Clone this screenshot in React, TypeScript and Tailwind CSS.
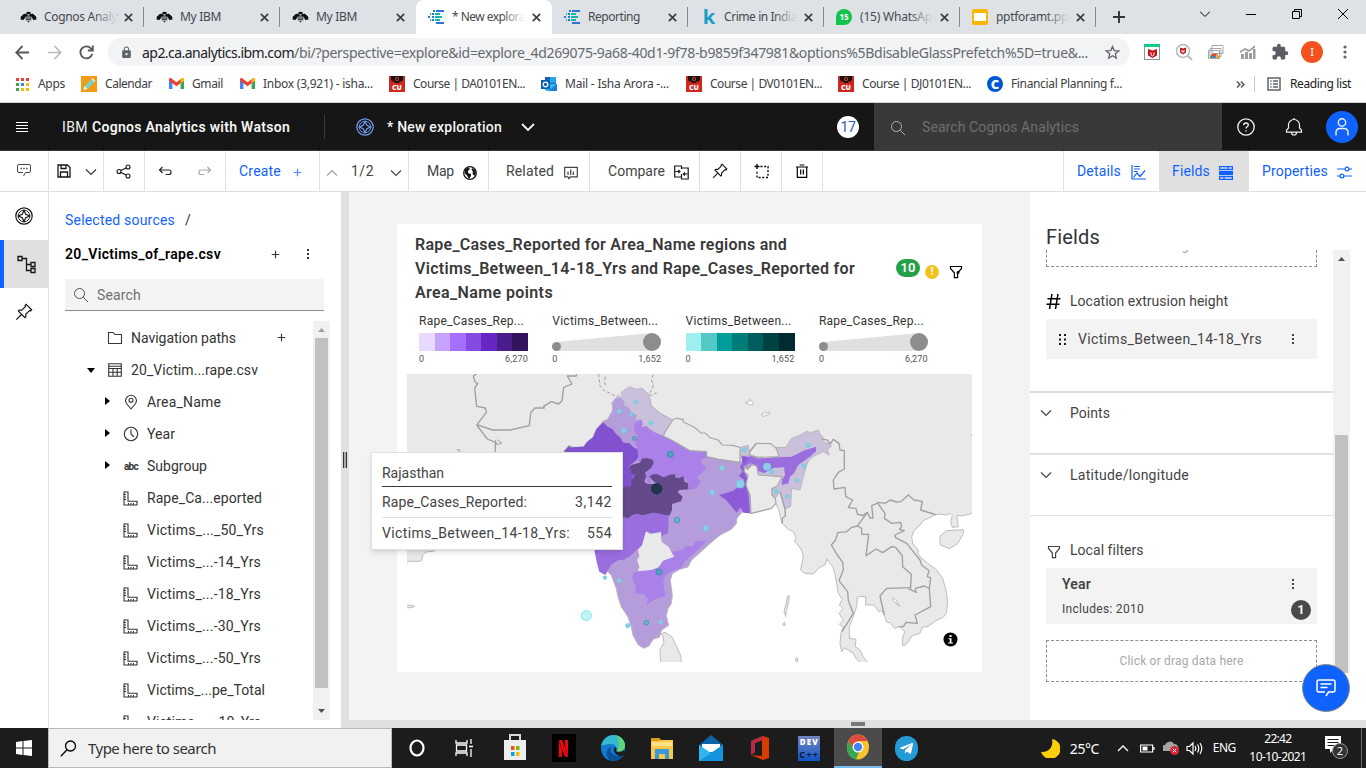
import React, { useLayoutEffect, useRef, type ReactNode } from "react";
import { SiNetflix } from "react-icons/si";
import { FaTelegramPlane } from "react-icons/fa";
import { MdExtension, MdLock } from "react-icons/md";

/* Single line of text tracked out or in so that it fills the given width. */
function T({ w, c = "", children }: { w: number; c?: string; children: string }) {
  const ref = useRef<HTMLSpanElement>(null);
  useLayoutEffect(() => {
    const el = ref.current;
    if (!el) return;
    el.style.letterSpacing = "0px";
    const natural = el.getBoundingClientRect().width;
    el.style.letterSpacing = `${(w - natural) / children.length}px`;
  }, [w, children]);
  return (
    <span ref={ref} className={`inline-block shrink-0 whitespace-pre ${c}`}>
      {children}
    </span>
  );
}

function Icon({ s = 16, v = 16, c = "", w = 1, children }: { s?: number; v?: number; c?: string; w?: number; children: ReactNode }) {
  return (
    <svg width={s} height={s} viewBox={`0 0 ${v} ${v}`} className={`block shrink-0 ${c}`} fill="none" stroke="currentColor" strokeWidth={w}>
      {children}
    </svg>
  );
}

const Chevron = ({ c = "", s = 12, up = false }: { c?: string; s?: number; up?: boolean }) => (
  <Icon s={s} v={12} c={c} w={1.2}>
    <path d={up ? "M1 8.5 6 3.5 11 8.5" : "M1 3.5 6 8.5 11 3.5"} />
  </Icon>
);
const Plus = ({ c = "", s = 10 }: { c?: string; s?: number }) => (
  <Icon s={s} v={10} c={c} w={1.3}><path d="M5 .8v8.4M.8 5h8.4" /></Icon>
);
const Dots = ({ c = "" }: { c?: string }) => (
  <svg width="4" height="14" viewBox="0 0 4 14" className={`shrink-0 ${c}`} fill="currentColor">
    <rect x="1" y="2" width="2" height="2" /><rect x="1" y="6" width="2" height="2" /><rect x="1" y="10" width="2" height="2" />
  </svg>
);
const Magnifier = ({ c = "", s = 16 }: { c?: string; s?: number }) => (
  <Icon s={s} c={c}><circle cx="6.5" cy="6.5" r="5" /><path d="M10.3 10.3 15 15" /></Icon>
);
const Compass = ({ c = "", s = 18 }: { c?: string; s?: number }) => (
  <Icon s={s} v={18} c={c} w={1.2}>
    <circle cx="9" cy="9" r="8.2" /><circle cx="9" cy="9" r="5.8" strokeWidth=".9" />
    <path d="M9 3.400 10.800 7.200 14.600 9 10.800 10.800 9 14.600 7.200 10.800 3.400 9 7.200 7.200Z" />
  </Icon>
);
const Pin = ({ s = 16 }: { s?: number }) => (
  <Icon s={s} w={1.1}><path d="M10 1.2 14.8 6 13.8 7 13 6.6 9.6 10 9.6 12.2 8.8 13 3 7.2 3.8 6.4H6L9.4 3 9 2.2ZM5.8 10.2 1.2 14.8" /></Icon>
);
const Funnel = ({ s = 14, dot = false }: { s?: number; dot?: boolean }) => (
  <Icon s={s} v={14} w={1.2}>
    <path d="M1.5 1.5h11v2L8.6 8v4.7H5.4V8L1.5 3.5Z" />{dot && <circle cx="9" cy="7.5" r="1.5" fill="currentColor" stroke="none" />}
  </Icon>
);

/* ---------- favicons ---------- */
const Bee = () => (
  <svg width="17" height="12" viewBox="0 0 17 12" fill="#111" className="shrink-0">
    <path d="M7.500 3 4 2.800.8 5.800l-.3 2.700 3.200.6 1.800-3.300 2-.6ZM9.500 3l3.500-.2 3.200 3 .3 2.700-3.200.6-1.800-3.300-2-.6Z" />
    <ellipse cx="8.500" cy="2" rx="2.300" ry="1.300" />
    <path d="M5.800 4.500h5.400v1H5.800ZM5.300 6.400h6.400v1H5.300ZM5.800 8.300h5.400v1H5.800ZM7 10.200h3l-1.500 1.300Z" />
  </svg>
);
const Dashes = () => (
  <svg width="17" height="16" viewBox="0 0 17 16" className="shrink-0">
    <g fill="#2f74d8"><path d="M8 1h8v2H8ZM4 4h2v2H4ZM0 7h2v2H0ZM4 10h2v2H4ZM8 13h8v2H8ZM4 7h2v2H4ZM5 1h2v2H5Z" /></g>
    <g fill="#14b8a6"><path d="M7 4h5v2H7ZM7 7h7v2H7ZM7 10h5v2H7ZM2 10h1v2H2ZM2 4h1v2H2Z" /></g>
  </svg>
);
const CU = () => (
  <div className="flex h-4 w-4 shrink-0 flex-col items-center bg-[#d0281f]">
    <svg width="16" height="8" viewBox="0 0 16 8"><path d="M2 0h12v4l-2 2-1-1-1 2H6L5 5 4 6 2 4Z" fill="#1b1110" /><circle cx="8" cy="3" r="2" fill="#c2493e" /><circle cx="8" cy="3" r="1" fill="#1b1110" /></svg>
    <span className="text-[7px] leading-[7px] font-black text-white">CU</span>
  </div>
);
const GmailM = () => (
  <svg width="15" height="12" viewBox="0 0 15 12" className="shrink-0">
    <path d="M0 1.500V11h3.400V4.500Z" fill="#4285f4" /><path d="M15 1.500V11h-3.400V4.500Z" fill="#34a853" />
    <path d="M0 1.500C0 .2 1.500-.3 2.500.5l5 3.800 5-3.800C13.500-.3 15 .2 15 1.500v1.200L7.500 8.300 0 2.700Z" fill="#ea4335" />
    <path d="M11.600 1.200 12.500.5c1-.8 2.500-.3 2.500 1v1.200l-3.400 2.500Z" fill="#fbbc04" />
  </svg>
);
const kLogo = <span className="w-4 pl-0.5 text-center text-[20px] leading-4 font-bold text-[#1a9cc9]">k</span>;
const WhatsApp = () => (
  <div className="flex h-4 w-4 shrink-0 items-center justify-center rounded-full rounded-bl-xs bg-[#12c34d] text-[8px] font-bold text-white">15</div>
);
const Slides = () => <div className="h-4 w-4 shrink-0 rounded-xs bg-[#fbb605] px-0.5 py-1"><div className="h-2 bg-white" /></div>;

const tabs: { icon: ReactNode; label: string; w: number; active?: boolean; sep?: boolean; fade?: boolean }[] = [
  { icon: <Bee />, label: "Cognos Analy", w: 73, sep: true, fade: true },
  { icon: <Bee />, label: "My IBM", w: 41, sep: true },
  { icon: <Bee />, label: "My IBM", w: 41 },
  { icon: <Dashes />, label: "* New explora", w: 73, active: true, fade: true },
  { icon: <Dashes />, label: "Reporting", w: 52, sep: true },
  { icon: kLogo, label: "Crime in India", w: 73, sep: true, fade: true },
  { icon: <WhatsApp />, label: "(15) WhatsAp", w: 72, sep: true, fade: true },
  { icon: <Slides />, label: "pptforamt.pp", w: 72, sep: true, fade: true },
];

function BrowserTabs() {
  return (
    <div className="flex h-[34px] bg-[#dee1e6] pl-2 text-[12px] text-[#45494d]">
      {tabs.map((t, i) => (
        <div key={i} className={`flex w-[136px] items-center ${t.active ? "rounded-t-lg bg-white" : ""}`}>
          <div className="flex w-full items-center pl-3">
            <div className="flex w-4 justify-center">{t.icon}</div>
            <div className="relative ml-2 w-[73px]">
              <T w={t.w}>{t.label}</T>
              {t.fade && <div className={`absolute top-0 right-0 h-full w-6 bg-gradient-to-r from-transparent ${t.active ? "to-white" : "to-[#dee1e6]"}`} />}
            </div>
            <Icon s={9} v={9} c="ml-[7px] text-[#3c4043]" w={1.7}><path d="m.8.8 7.400 7.400M8.200.8.8 8.200" /></Icon>
            <div className={`ml-auto h-5 w-px ${t.sep ? "bg-[#85888c]" : ""}`} />
          </div>
        </div>
      ))}
      <div className="ml-[17px] flex items-center"><Icon s={12} v={12} c="text-[#333]" w={1.900}><path d="M6 0v12M0 6h12" /></Icon></div>
      <div className="ml-auto flex h-7 items-center text-black">
        <Icon s={10} v={10} c="mr-[36px]"><path d="m0 2.500 5 5 5-5" /></Icon>
        <div className="mr-[36px] h-px w-2.5 bg-black" />
        <Icon s={10} v={10} c="mr-[36px]"><path d="M.5 2.500h7v7h-7ZM2.500 2.500v-2h7v7h-2" /></Icon>
        <Icon s={10} v={10} c="mr-[18px]"><path d="m0 0 10 10M10 0 0 10" /></Icon>
      </div>
    </div>
  );
}

const Shield = () => <svg width="9" height="9" viewBox="0 0 9 9"><path d="m0 0 4.500 1.500L9 0v6.500L4.500 9 0 6.500Z" fill="#c01818" /><path d="M3 3.500v2.300L4.500 7 6 5.800V3.500" stroke="#fff" fill="none" /></svg>;

function AddressBar() {
  return (
    <div className="flex h-9 items-center bg-white text-[14px]">
      <Icon s={15} v={15} c="ml-[15px] text-[#55585c]" w={1.800}><path d="M14 7.500H1.500M7.500 1 1.200 7.500l6.300 6.500" /></Icon>
      <Icon s={15} v={15} c="ml-[17px] text-[#b8babd]" w={1.600}><path d="M1 7.500h12.500M7.500 1l6.300 6.500-6.300 6.500" /></Icon>
      <Icon s={15} v={15} c="ml-[17px] text-[#55585c]" w={1.900}><path d="M13.200 9A6 6 0 1 1 12 3.500L13 5M13.800.5v5H8.800" /></Icon>
      <div className="ml-[14px] flex h-7 w-[1022px] items-center rounded-full bg-[#f1f3f4] pl-3">
        <MdLock className="text-[#5f6368]" size={13} />
        <T w={152} c="ml-[9px] text-[#202124]">ap2.ca.analytics.ibm.com</T>
        <T w={794} c="text-[#676a6e]">/bi/?perspective=explore&id=explore_4d269075-9a68-40d1-9f78-b9859f347981&options%5BdisableGlassPrefetch%5D=true&...</T>
        <Icon s={15} v={15} c="mr-[10px] ml-auto text-[#5f6368]" w={1.300}><path d="m7.500 1.500 1.700 4.100 4.500.3-3.400 2.900 1 4.400-3.800-2.400-3.800 2.400 1-4.400L1.300 5.900l4.500-.3Z" /></Icon>
      </div>
      <div className="ml-[14px] flex h-4 w-4 items-center justify-center border border-t-[3px] border-[#8d9295] border-t-[#0ccf7f]"><Shield /></div>
      <svg width="18" height="18" viewBox="0 0 18 18" className="ml-[15px]"><circle cx="8" cy="8" r="6.500" fill="none" stroke="#b3bcc3" strokeWidth="1.500" /><path d="m13 13 4 4" stroke="#b3bcc3" strokeWidth="2" /><path d="m5 4.500 3 1 3-1v5L8 11.500l-3-2Z" fill="#c01818" /><path d="M7 7v2h2V7" stroke="#fff" fill="none" /></svg>
      <svg width="16" height="16" viewBox="0 0 16 16" className="ml-[15px]" fill="#fff" stroke="#a5a8aa"><path d="M4 1.500h11v8H4ZM2 4.500h11v8H2ZM.5 6.500h11v8H.5Z" /><path d="M2 14a4.500 4.500 0 0 1 9 0Z" fill="#ea4335" stroke="none" /><path d="M8 10.200A4.500 4.500 0 0 1 11 14H8Z" fill="#fbbc04" stroke="none" /><path d="M2 14a4.500 4.500 0 0 1 2-3.600L5.500 14Z" fill="#34a853" stroke="none" /><path d="M4.500 14a2 2 0 0 1 4 0Z" fill="#4285f4" stroke="none" /></svg>
      <svg width="16" height="14" viewBox="0 0 16 14" className="ml-[16px]" fill="#9c9ea1"><path d="M1 9h3v5H1ZM5 7h3v7H5ZM9 8h3v6H9ZM13 4h2.500v10H13ZM0 6l5-3 4 2 6-5v2.500L9 7 5 5 0 8Z" /></svg>
      <MdExtension className="ml-[15px] text-[#5a5d61]" size={18} />
      <div className="ml-[12px] flex h-[22px] w-[22px] items-center justify-center rounded-full bg-[#f4511e] text-[11px] text-white">I</div>
      <svg width="4" height="14" viewBox="0 0 4 14" className="ml-[20px]" fill="#5f6368"><circle cx="2" cy="2" r="1.600" /><circle cx="2" cy="7" r="1.600" /><circle cx="2" cy="12" r="1.600" /></svg>
    </div>
  );
}

const AppsGrid = () => (
  <div className="grid grid-cols-3 gap-[2px]">
    {["bg-[#ea4335]", "bg-[#ea4335]", "bg-[#ea4335]", "bg-[#34a853]", "bg-[#4285f4]", "bg-[#fbbc04]", "bg-[#34a853]", "bg-[#fbbc04]", "bg-[#fbbc04]"].map((c, i) => <div key={i} className={`h-[3px] w-[3px] ${c}`} />)}
  </div>
);
const Pencil = () => <svg width="16" height="16" viewBox="0 0 16 16"><path d="M0 0h16v16H0Z" fill="#f39a17" /><path d="m2.500 14 1-4 7-7 3 3-7 7Z" fill="#79d2c3" /><path d="m2.500 14 1-4 3 3Z" fill="#fff0c8" /><path d="m10.500 3 1-1 3 3-1 1Z" fill="#fce3e0" /></svg>;
const Outlook = () => <svg width="16" height="16" viewBox="0 0 16 16"><path d="M4 1h11v13H4Z" fill="#1066b5" /><path d="M9 1h6v6H9Z" fill="#2ba5e6" /><path d="M4 8h12v7H5Z" fill="#36b9f1" /><path d="m16 8-9 7h8l1-1Z" fill="#1a7fd0" /><path d="M0 4h9v9H0Z" fill="#0a5fb4" /><circle cx="4.500" cy="8.500" r="2.300" fill="none" stroke="#fff" strokeWidth="1.300" /></svg>;
const Coursera = () => <div className="flex h-4 w-4 items-center justify-center rounded-full bg-[#0056d2] text-[13px] leading-4 font-black text-white">C</div>;

const bookmarks: { icon: ReactNode; label: string; w: number; cell: string }[] = [
  { icon: <AppsGrid />, label: "Apps", w: 27, cell: "w-[67px]" },
  { icon: <Pencil />, label: "Calendar", w: 47, cell: "w-[87px]" },
  { icon: <GmailM />, label: "Gmail", w: 31, cell: "w-[71px]" },
  { icon: <GmailM />, label: "Inbox (3,921) - isha...", w: 110, cell: "w-[150px]" },
  { icon: <CU />, label: "Course | DA0101EN...", w: 112, cell: "w-[152px]" },
  { icon: <Outlook />, label: "Mail - Isha Arora -...", w: 104, cell: "w-[145px]" },
  { icon: <CU />, label: "Course | DV0101EN...", w: 112, cell: "w-[152px]" },
  { icon: <CU />, label: "Course | DJ0101EN...", w: 109, cell: "w-[149px]" },
  { icon: <Coursera />, label: "Financial Planning f...", w: 111, cell: "w-[140px]" },
];

function Bookmarks() {
  return (
    <div className="flex h-[33px] items-center border-b border-[#d5d5d5] bg-white pb-1 pl-[14px] text-[12px] text-[#3c4043]">
      {bookmarks.map((b, i) => (
        <div key={i} className={`flex shrink-0 items-center gap-2 ${b.cell}`}>
          <div className="flex w-4 justify-center">{b.icon}</div>
          <T w={b.w}>{b.label}</T>
        </div>
      ))}
      <Icon s={9} v={9} c="ml-auto text-[#555]" w={1.500}><path d="m1 1.500 3 3-3 3M5 1.500l3 3-3 3" /></Icon>
      <div className="ml-[9px] h-4 w-px bg-[#c8cacc]" />
      <Icon s={14} v={14} c="ml-[12px] text-[#5f6368]" w={1.500}><path d="M1 1h12v12H1ZM3.300 4h1.300M6 4h5M3.300 7h1.300M6 7h5M3.300 10h1.300M6 10h5" /></Icon>
      <T w={61} c="mr-[15px] ml-[9px] text-[#202124]">Reading list</T>
    </div>
  );
}

function AppHeader() {
  return (
    <div className="flex h-12 items-center border-b border-[#393939] bg-[#161616] pt-px text-[14px] text-[#f4f4f4]">
      <Icon s={12} v={12} c="ml-4 text-white"><path d="M0 1.500h12M0 4.500h12M0 7.500h12M0 10.500h12" /></Icon>
      <T w={26} c="ml-[34px]">IBM</T>
      <T w={198} c="ml-1 font-semibold">Cognos Analytics with Watson</T>
      <div className="ml-[34px] h-6 w-px bg-[#393939]" />
      <Compass c="ml-[31px] text-[#6f9bf0]" />
      <T w={115} c="ml-[13px] font-medium">* New exploration</T>
      <Icon s={14} v={14} c="ml-[19px]" w={1.800}><path d="m1 4 6 6 6-6" /></Icon>
      <div className="ml-[302px] flex h-[22px] w-[22px] items-center justify-center rounded-full bg-white text-[#2a5db0]"><T w={15}>17</T></div>
      <div className="-mt-px ml-[15px] flex h-[47px] w-[348px] items-center bg-[#393939] pt-0.5 pl-4 text-[#6f6f6f]">
        <Magnifier c="text-[#b0b0b0]" />
        <T w={157} c="ml-4">Search Cognos Analytics</T>
      </div>
      <Icon s={18} v={18} c="ml-[15px]" w={1.300}><circle cx="9" cy="9" r="8.200" /><path d="M6.700 7.200C6.700 5.800 7.600 5 9 5s2.300.8 2.300 2-.7 1.500-1.500 2c-.7.4-.8.800-.8 1.600M9 12.200v1.400" /></Icon>
      <Icon s={18} v={18} c="ml-[30px]" w={1.200}><path d="M1.500 14.200v-2L3.500 10V7a5.500 5.500 0 0 1 11 0v3l2 2.200v2ZM6.500 14.500a2.500 2.500 0 0 0 5 0M9 0v1.500" /></Icon>
      <div className="ml-[23px] flex h-8 w-8 items-center justify-center rounded-full bg-[#0f62fe]"><Icon s={20} v={20} w={1.400}><circle cx="10" cy="5.500" r="3.700" /><path d="M4 18.500v-3c0-2.500 1.500-4 4-4h4c2.500 0 4 1.500 4 4v3" /></Icon></div>
    </div>
  );
}

function Toolbar() {
  const cell = "flex h-full shrink-0 items-center border-r border-[#e0e0e0]";
  return (
    <div className="flex h-[41px] items-center border-b border-[#e0e0e0] bg-white text-[14px] text-[#444]">
      <div className={`${cell} w-[49px] pl-4`}><Icon><path d="M3 1.500h10A1.500 1.500 0 0 1 14.500 3v5A1.500 1.500 0 0 1 13 9.500h-3.500L7.500 13M7 9.500H3A1.500 1.500 0 0 1 1.500 8V3A1.500 1.500 0 0 1 3 1.500" /><path d="M4.500 5.500h1.300M7.300 5.500h1.300M10.200 5.500h1.300" strokeWidth="1.500" /></Icon></div>
      <div className={`${cell} w-[55px] pl-2 text-[#161616]`}>
        <Icon s={14} v={14} w={1.300}><path d="M1 1h9.500L13 3.500V13H1ZM4 1v3.500h5V1M3.500 13V8h7v5" /></Icon>
        <Chevron c="ml-[14px] mt-px text-[#393939]" />
      </div>
      <div className={`${cell} w-[41px] pl-3 text-[#161616]`}><Icon s={15} v={15} w={1.100}><circle cx="3" cy="7.500" r="2" /><circle cx="12" cy="3" r="2" /><circle cx="12" cy="12" r="2" /><path d="m4.800 6.600 5.400-2.700M4.800 8.400l5.400 2.700" /></Icon></div>
      <div className={`${cell} w-[81px] gap-[26px] pl-[13px] text-[#262626]`}>
        <Icon s={14} v={14} w={1.200}><path d="M4.500 3 1.500 6l3 3M1.500 6H11a2 2 0 0 1 2 2v.5a2 2 0 0 1-2 2H7.500" /></Icon>
        <Icon s={14} v={14} c="text-[#a8a8a8]" w={1.200}><path d="m9.500 3 3 3-3 3M12.500 6H3a2 2 0 0 0-2 2v.5a2 2 0 0 0 2 2h3.500" /></Icon>
      </div>
      <div className={`${cell} w-[94px] pl-[13px] text-[#0f62fe]`}><T w={42}>Create</T><Plus s={9} c="mt-[3px] ml-[12px] text-[#4589ff]" /></div>
      <div className={`${cell} w-[89px] pl-[6px]`}><Chevron up c="mt-1 text-[#a0a0a0]" /><T w={23} c="ml-[13px]">1/2</T><Chevron c="mt-1 ml-[16px]" /></div>
      <div className={`${cell} w-[80px] pl-[18px]`}><T w={27}>Map</T>
        <svg width="14" height="14" viewBox="0 0 14 14" className="mt-[3px] ml-[9px]"><circle cx="7" cy="7" r="6.300" fill="#fff" stroke="#161616" strokeWidth="1.300" /><path d="M2 3 5.500 1.500 7 3 5 5v2l3 1v2l-2 3L4 9.500 1.500 7ZM9 2l3 2 1 3-1.500 3L9.500 8 10 5.500 8.500 4Z" fill="#161616" /></svg>
      </div>
      <div className={`${cell} w-[101px] pl-[17px]`}><T w={48}>Related</T><Icon s={14} v={14} c="mt-[3px] ml-[10px]" w={1.200}><path d="M.7 1.300h12.600v9.500H6.500L5 12.700 4 10.800H.7ZM4 5.500V9M6.700 3.500V9M9.300 5.500V9" /></Icon></div>
      <div className={`${cell} w-[110px] pl-[18px]`}><T w={57}>Compare</T><Icon s={15} v={15} c="mt-[3px] ml-[9px] text-[#161616]" w={1.200}><path d="M7.500 12H.7V1h6.800v3M7.500 9v5h6.700V3H7.500M1.500 6.500H6M4.300 4.800 6 6.500 4.300 8.200M13.500 9H9.300M11 7.300 9.300 9 11 10.700" /></Icon></div>
      <div className={`${cell} w-[41px] justify-center text-[#161616]`}><Pin /></div>
      <div className={`${cell} w-[41px] justify-center`}><Icon s={15} v={15} c="text-black" w={1.300}><path d="M3 0v5M.5 2.500h5" /><path d="M6.500 2.500H14v11H3V6" strokeDasharray="2 1.700" /></Icon></div>
      <div className={`${cell} w-[41px] justify-center`}><Icon s={14} v={14} c="text-black" w={1.200}><path d="M1 3h12M4.700 1h4.600M2.300 3v10.300h9.400V3M5.700 5.500v5M8.300 5.500v5" /></Icon></div>
      <div className="ml-auto flex h-full w-[96px] items-center border-l border-[#e0e0e0] pl-[13px] text-[#0f62fe]"><T w={44}>Details</T><Icon s={15} v={15} c="mt-[3px] ml-[10px]" w={1.200}><path d="M1 0v14h14M3 1.500h6M3 4h6M3 6.500h3.500M2.500 12.500l3.500-4.500 3 3.500 5-6" /></Icon></div>
      <div className="flex h-full w-[90px] items-center bg-[#e0e0e0] pl-[13px] text-[#0f62fe]"><T w={38}>Fields</T><Icon s={14} v={14} c="mt-[3px] ml-[9px]" w={1.200}><path d="M.6.6h12.800v2.800H.6ZM.6 10.600h12.800v2.800H.6ZM9 .6v2.800M5 10.600v2.800" /><path d="M0 4.800h14v4.400H0Z" fill="currentColor" stroke="none" /></Icon></div>
      <div className="flex h-full w-[117px] items-center pl-[13px] text-[#0f62fe]"><T w={66}>Properties</T><Icon s={15} v={15} c="mt-[3px] ml-[9px]" w={1.200}><path d="M0 4h8M12 4h3M0 11h3M7 11h8" /><circle cx="10" cy="4" r="1.900" /><circle cx="5" cy="11" r="1.900" /></Icon></div>
    </div>
  );
}

const Ruler = () => <Icon s={15} v={15} w={1.100}><path d="M1 1h4v9.300h9V14H1ZM1 3.500h2M1 6h2M1 8.500h2M5.500 14v-2M8 14v-2M10.500 14v-2" /></Icon>;
const measures: [string, number][] = [["Rape_Ca...eported", 115], ["Victims_..._50_Yrs", 117], ["Victims_...-14_Yrs", 114], ["Victims_...-18_Yrs", 114], ["Victims_...-30_Yrs", 114], ["Victims_...-50_Yrs", 114], ["Victims_...pe_Total", 118], ["Victims_..._10_Yrs", 114]];

function Sources() {
  return (
    <div className="flex h-[536px] shrink-0">
      <div className="flex w-[49px] flex-col border-r border-[#e0e0e0] bg-white text-[#161616]">
        <div className="flex h-12 items-center justify-center"><Compass /></div>
        <div className="flex h-12 items-center border-l-4 border-[#0f62fe] bg-[#e0e0e0] pl-[13px]"><Icon s={19} v={19} w={1.300}><path d="M1 1.500h4v4H1ZM5 3.500h4.500v12H14M9.500 9.500H14M14 7.500h4v4h-4ZM14 13.500h4v4h-4Z" /></Icon></div>
        <div className="flex h-12 items-center justify-center"><Pin s={18} /></div>
      </div>
      <div className="flex w-[292px] flex-col bg-white pl-4 text-[14px] text-[#333]">
        <div className="mt-[18px] flex h-5 items-center"><T w={110} c="text-[#0f62fe]">Selected sources</T><T w={5} c="ml-[10px]">/</T></div>
        <div className="mt-[14px] flex h-5 items-center"><T w={156} c="font-semibold text-black">20_Victims_of_rape.csv</T><Plus s={9} c="ml-[50px]" /><Dots c="ml-[26px]" /></div>
        <div className="mt-[15px] flex h-8 w-[259px] items-center border-b border-[#8d8d8d] bg-[#f3f3f3] pt-px pl-[8px] text-[#6f6f6f]"><Magnifier c="text-[#525252]" /><T w={44} c="ml-2">Search</T></div>
        <div className="mt-[10px] flex h-[399px] overflow-hidden">
          <div className="w-[248px] pt-px">
            <div className="flex h-8 items-center pl-[42px]">
              <Icon s={16} c="text-[#393939]" w={1.100}><path d="M1.500 2.500h4.700l1.800 2h6.500v9h-13Z" /></Icon><T w={105} c="ml-2">Navigation paths</T><Plus s={9} c="mb-0.5 ml-[41px]" />
            </div>
            <div className="flex h-8 items-center pl-[22px]">
              <svg width="8" height="5" viewBox="0 0 8 5"><path d="M0 0h8L4 5Z" fill="#000" /></svg>
              <Icon s={14} v={14} c="ml-[13px]" w={1.100}><path d="M.7.7h12.600v12.600H.7ZM.7 3.300h12.600M.7 5.500h12.600M.7 9.300h12.600M5 5.500v7.800M9.200 5.500v7.800" /></Icon><T w={127} c="ml-[9px]">20_Victim...rape.csv</T>
            </div>
            {[
              { n: "Area_Name", w: 74, i: <Icon s={16} w={1.100}><path d="M8 15 3.500 9.500a5.300 5.300 0 1 1 9 0Z" /><circle cx="8" cy="6.300" r="2" /></Icon> },
              { n: "Year", w: 28, i: <Icon s={16} w={1.100}><circle cx="8" cy="8" r="6.700" /><path d="M8 3.500V8l2.800 3" /></Icon> },
              { n: "Subgroup", w: 60, i: <T w={14} c="text-[10px] font-bold">abc</T> },
            ].map((r) => (
              <div key={r.n} className="flex h-8 items-center pl-[40px]">
                <svg width="5" height="8" viewBox="0 0 5 8" className="mb-[3px]"><path d="M0 0v8l5-4Z" fill="#000" /></svg>
                <div className="ml-[13px] flex w-4 justify-center">{r.i}</div><T w={r.w} c="ml-[8px]">{r.n}</T>
              </div>
            ))}
            {measures.map(([m, w], i) => (
              <div key={i} className="flex h-8 items-center pl-[58px]"><Ruler /><T w={w} c="ml-[9px]">{m}</T></div>
            ))}
          </div>
          <div className="flex w-[17px] flex-col items-center bg-[#f1f1f1]">
            <svg width="7" height="17" viewBox="0 0 7 17"><path d="M0 11h7L3.500 7Z" fill="#a3a3a3" /></svg>
            <div className="h-[350px] w-[13px] bg-[#c1c1c1]" />
            <svg width="7" height="17" viewBox="0 0 7 17" className="mt-auto"><path d="M0 6h7l-3.500 4Z" fill="#505050" /></svg>
          </div>
        </div>
      </div>
      <div className="flex w-2 flex-col bg-[#e0e0e0] pt-[260px]"><div className="ml-0.5 h-4 w-1 border-x border-[#333] bg-[#aaa]" /></div>
    </div>
  );
}

/* ---------- map ---------- */
const shape = { stroke: "none" } as const;
function WorldMap() {
  return (
    <svg width="565" height="288" viewBox="33 42 1695 864" className="block" fill="none" strokeLinejoin="round">
      <rect x="33" y="42" width="1695" height="864" fill="#fff" />
      <g fill="#e9e9e9" stroke="#bdbdbd" strokeWidth="3">
        <path d="M20 565H115V573L90 576 80 585 77 602 70 604 40 604 20 612ZM20 734 46 736 56 739 45 743 20 744" />
        <path d="m795 822 12-5 22 15 26 57V920H794L792 868 804 848 801 828Z" />
        <g transform="translate(882)">
          <path d="M-900 20H870V452L846 460 820 467 800 467 803 485 805 500 787 502 782 485 787 467 780 460 770 465 750 462 737 464 715 475 700 482 690 495 672 512 665 530 668 550 685 571 684 580 692 592 715 611 740 630 758 655 768 690 773 728 769 760 760 772 738 782 715 799 697 802 690 820 665 828 655 845 644 857 637 856 639 828 645 815 628 800 615 806 600 788 590 786 583 765 575 752 567 755 552 735 527 735V710L512 709 502 712 500 740 488 775 478 800 478 835 498 838 496 860 510 870 520 890 530 904 545 916H520L500 898 490 880 475 870 462 863 455 876 450 850 453 820 460 800 448 793 460 780 447 760 460 747 448 735 457 718 445 700 435 642 428 620 410 597 406 614 385 625 370 642 345 640 332 630 340 590 335 570 320 550 313 545 318 533 310 515 295 508 275 488 268 455 258 430 250 430 245 445 200 457 180 460 150 440 0 400H-900Z" />
          <path d="m750 528 20-16 50-3v12l-17 30-25 15-28-12Z" />
          <path d="m292 709 6-2-2 20-7 25-2 18-5-16 7-25ZM277 794l7-7 1 10ZM317 896l5-3 1 12h-5Z" />
          <g fill="#fff"><path d="m166 127 10-1 2-8 12 9-2 8-10-1ZM215 162l3 8 20-8 2-5-18 2ZM608 714l8 4 8 10-5 2-11-9ZM618 730l12 5-4 4Z" /></g>
        </g>
      </g>
      <path d="m505 272 15-15 10 5 33-2 10-14 18-14 10-24 20-24 14-6 15-28-2-22 12-14 20-6 2-16 20-12 20 8 15-4 22 20 8 35 25 20 40 22-22 36-5 12 30 15 45 23 66 5 10 17 40 10 55 7 2-25 25-30 3 30 25 15v18l-23-8-17 10 3 25 7 10-5 20 10 35 2 50-22-5-10-7-10 10-18 20-2 17-15 17-35 18-35 30-33 30-17 15-10 20-25 7-22 13-6 20 6 45-3 25-10 15-5 20 7 30-22 15-5 20-20 7-12 20-16 7-17-11-15-28-5-25-10-30-20-30-10-30-5-25-15-40-15-15-7-25-8-40-35-50-60-120Z" fill="#b59ddb" stroke="#bcb7c4" strokeWidth="3" />
      <g {...shape}>
        <path d="M680 92 700 80 720 88 735 84 757 105 765 140 790 160 830 182 808 216 802 228 780 220 765 208 750 197 740 202 738 185 730 178 720 182 722 165 705 155 700 145 685 136 685 125 672 112Z" fill="#cac0dc" />
        <path d="M622 187 635 200 650 208 660 222 672 232 682 248 700 250 715 264 724 266 729 285 724 298 700 318 703 335 718 345 710 352 708 380 680 382 540 400 505 272 520 257 530 262 563 260 573 246 591 232 601 208Z" fill="#8151cf" />
        <path d="M735 178 740 190 736 202 750 198 765 212 802 228 832 243 877 266 900 272 932 275 935 292 915 300 918 312 932 325 912 345 902 350 915 365 900 385 880 390 875 365 862 350 845 355 838 343 800 350 770 343 762 350 765 370 755 368 748 345 772 312 768 300 748 295 728 305 724 262 718 250 724 225 714 212 716 190Z" fill="#a981e8" />
        <path d="M700 320 708 314 732 308 738 296 752 294 770 299 773 310 765 324 748 338 750 350 745 366 755 372 790 372 775 366 760 350 770 343 785 343 800 351 812 349 820 344 838 343 838 352 848 355 862 349 866 366 875 368 878 388 850 390 845 396 860 410 855 424 840 428 828 432 828 450 820 467 798 464 775 458 755 463 740 466 720 462 705 468 695 476 680 470 560 470 560 382 680 382 706 378 706 360 714 350 718 345 704 338Z" fill="#64498b" />
        <path d="M560 470H680L695 476 705 468 720 462 740 466 775 458 818 467 816 520 800 524 796 544 785 528 755 515 748 522 738 558 728 565 700 590 682 600 668 600 645 614 628 645 610 635 603 610 595 570 560 520Z" fill="#9b6ee0" />
        <path d="M750 514 762 522 795 516 797 546 818 560 825 574 835 590 802 602 788 622 768 630 740 635 725 634 730 620 723 600 730 588 726 570 738 556Z" fill="#e9e9e9" />
        <path d="M835 590 826 575 860 570 868 560 892 558 896 545 932 541 915 560 882 590 865 605 855 625 830 632 808 645 802 665 808 710 790 712 770 722 752 734 756 718 745 703 716 700 720 680 708 655 712 640 725 634 768 630 788 622 802 602Z" fill="#a981e8" />
        <path d="M1034 282 1052 290 1085 298 1088 318 1062 308 1045 318 1055 328 1048 345 1055 355 1052 375 1058 410 1062 460 1042 458 1034 442 1022 458 990 420 969 405 1010 393 1030 378 1045 360 1028 347 1040 335 1032 320 1040 310Z" fill="#8d5bd9" />
        <path d="m1034 262 23-7 3 30-26 3Z" fill="#cac0dc" stroke="#bbb" strokeWidth="3" />
      </g>
      <g transform="translate(882)">
        <path d="M268 290 255 263 288 262 298 245 305 235 330 226 350 214 362 218 385 210 390 222 400 232 396 246 415 250 425 258 412 268 418 285 400 275 372 288 355 302 345 330 330 390 305 385 302 440 285 447 270 395 255 415 245 405 244 390 260 378 275 350 205 345 203 322 260 310Z" fill="#cac0dc" stroke="#bab6c2" strokeWidth="3" />
        <path d="M182 288 205 297 250 292 305 290 340 272 378 260 378 274 360 290 325 315 312 340 300 350 295 370 275 375 276 360 285 345 282 322 250 324 222 340 203 332 200 318 186 310 165 312Z" fill="#9b6ee0" />
        <g fill="#e9e9e9" stroke="#a8a8a8" strokeWidth="3.500">
          <path d="M180 275 200 250 242 251 258 264 268 290 205 292 180 285ZM162 317 172 328 186 315 200 318 205 345 276 350 262 378 245 386 246 405 256 416 258 430 245 445 200 456 183 460 180 405 168 375 174 346 163 335Z" />
        </g>
      </g>
      <path d="M802 228 808 215 830 180 840 175 862 178 862 186 882 195 900 205 914 219 928 219 942 233 966 240 980 255 1010 256 1032 262V307L970 298 932 290 932 275 882 272 832 243Z" fill="#e9e9e9" stroke="#a8a8a8" strokeWidth="3.500" />
      <g stroke="#a0a0a0" strokeWidth="4">
        <path d="m242 42-10 6 5 18 8 5-9 13 6 55 26 5 3 13-28 37 47 16h52l58-13 4-38 12-15 29 0-2-5 23-14 22 7 10-10 5-40 25-10-14-24h27v-8M242 195l32 42 24 10v30" />
        <path d="m608 42 4 35 10 13 40 20 17-15M628 50l-3 15 5 14M772 45l-6 14 6 15-3 12-10 16 10 5 15-12" strokeDasharray="10 6" strokeWidth="3" />
        <path d="m298 240 4 14 15-5-13-10M182 268l10 3-3 6M503 275l15-18 10 6" strokeWidth="3" />
        <g transform="translate(882)">
          <path d="M395 238 412 240 420 252 430 238 447 250 450 270 463 272 463 327 445 337 430 360 432 387 465 382 467 410 488 420 475 443 498 445 502 462 518 467 532 457 540 474 549 474 545 437 568 427 585 430 600 420 620 426 632 425 655 405 672 420 697 424 692 450 737 464" />
          <path d="M532 457 502 498 485 502 470 515 443 518 437 540 424 555 440 582 458 607 460 630 447 662 473 695 475 722 490 760 456 815M502 498 515 505V523H536L528 587 558 567 578 578 605 560 617 562 637 588 638 620 664 643 662 683 590 685 570 708 583 765" />
          <path d="M562 428 585 460 583 475 605 490 632 487 635 500 628 508 643 512 615 525 617 533 650 550 690 600 695 615 717 632 712 650 722 653 718 685 703 678 676 685 678 697 655 685M718 685 722 740 675 765 682 790 648 787 640 800 628 800" />
          <path d="M270 395 285 447 286 468 277 475V491" /><path d="M846 222v6" strokeWidth="3" />
        </g>
      </g>
      {([[720, 127, 5, 0], [670, 154, 6, 0], [706, 164, 5, 0], [764, 189, 6, 0], [684, 212, 7, 0], [715, 235, 6, 1], [823, 283, 9, 2], [843, 480, 8, 1], [789, 636, 9, 2], [627, 653, 5, 0], [669, 662, 6, 0], [695, 797, 6, 0], [751, 788, 7, 1], [794, 786, 5, 0], [1046, 269, 6, 0], [977, 324, 7, 0], [949, 397, 7, 0], [930, 505, 8, 0], [1113, 320, 11, 0], [1127, 335, 6, 0], [1237, 256, 6, 0], [1223, 318, 6, 0], [1203, 361, 5, 0], [1140, 394, 6, 0], [1174, 409, 5, 0], [1033, 372, 12, 0]] as number[][]).map(([x, y, r, k], i) => (
        <circle key={i} cx={x} cy={y} r={r} fill={["#95cbe4", "#75acc9", "#579fc7"][k]} stroke={["#65d3df", "#459fab", "#388daa"][k]} strokeWidth="3" />
      ))}
      <circle cx="782" cy="386" r="16" fill="#21344f" stroke="#182c43" strokeWidth="2" />
      <circle cx="571" cy="767" r="15" fill="#bff5f4" stroke="#83e8ea" strokeWidth="3" />
    </svg>
  );
}

const purple = ["bg-[#e8daff]", "bg-[#c5a3fd]", "bg-[#a56eff]", "bg-[#854adf]", "bg-[#6626c3]", "bg-[#491d8b]", "bg-[#31135e]"];
const teal = ["bg-[#9ef0f0]", "bg-[#52c9c7]", "bg-[#009d9a]", "bg-[#007d79]", "bg-[#005d5d]", "bg-[#004144]", "bg-[#022b30]"];

function Legend({ label, max, colors, lw }: { label: string; max: string; colors?: string[]; lw: number }) {
  return (
    <div className="w-[109px]">
      <div className="flex h-4 items-center text-[12px] text-[#333]"><T w={lw}>{label}</T></div>
      <div className="mt-1 h-[18px]">
        {colors ? <div className="flex h-full">{colors.map((c) => <div key={c} className={`flex-1 ${c}`} />)}</div> : (
          <svg width="109" height="18" viewBox="0 0 109 18"><path d="M4 9 100 0v18H4Z" fill="#e0e0e0" /><circle cx="4.500" cy="13.500" r="4.500" fill="#8d8d8d" /><circle cx="100" cy="9" r="9" fill="#8d8d8d" /></svg>
        )}
      </div>
      <div className="mt-[3px] flex h-3 items-center justify-between text-[9px] text-[#525252]"><T w={5}>0</T><T w={23}>{max}</T></div>
    </div>
  );
}

function Canvas() {
  return (
    <div className="h-[528px] flex-1 bg-[#f3f3f3] pt-8 pl-12">
      <div className="relative h-[448px] w-[585px] bg-white pt-2">
        <div className="flex h-[72px] pl-[18px]">
          <div className="flex w-[481px] flex-col pt-px text-[16px] leading-6 font-semibold text-[#393939]">
            <T w={372} c="self-start">Rape_Cases_Reported for Area_Name regions and</T>
            <T w={440} c="self-start">Victims_Between_14-18_Yrs and Rape_Cases_Reported for</T>
            <T w={138} c="self-start">Area_Name points</T>
          </div>
          <div className="mt-[27px] flex h-[18px] w-6 items-center justify-center rounded-full bg-[#24a148] text-[13px] font-semibold text-white"><T w={15}>10</T></div>
          <div className="mt-[33px] ml-[5px] flex h-[14px] w-[14px] items-center justify-center rounded-full bg-[#f1c21b] text-[11px] font-bold text-white">!</div>
          <div className="mt-[33px] ml-[10px] text-black"><Funnel dot /></div>
        </div>
        <div className="mt-[9px] flex gap-[24.300px] pl-[22px]">
          <Legend label="Rape_Cases_Rep..." lw={105} max="6,270" colors={purple} />
          <Legend label="Victims_Between..." lw={106} max="1,652" />
          <Legend label="Victims_Between..." lw={106} max="1,652" colors={teal} />
          <Legend label="Rape_Cases_Rep..." lw={105} max="6,270" />
        </div>
        <div className="mt-[8px] ml-[10px]"><WorldMap /></div>
        <svg width="15" height="15" viewBox="0 0 15 15" className="absolute top-[408px] left-[546px]"><circle cx="7.500" cy="7.500" r="7" fill="#000" /><path d="M6.500 3h2v2h-2ZM5.500 6.200h3v4.300H10v1H5.200v-1h1.500V7.200H5.500Z" fill="#fff" /></svg>
        <div className="absolute top-[228px] left-[-26px] h-[98px] w-[252px] border border-[#e0e0e0] bg-white pr-[10px] pl-[10px] text-[14px] text-[#444] shadow-md">
          <div className="flex h-[34px] items-center border-b border-[#393939] pt-2"><T w={62}>Rajasthan</T></div>
          <div className="flex h-[31px] items-center justify-between border-b border-[#e0e0e0]"><T w={145}>Rape_Cases_Reported:</T><T w={37}>3,142</T></div>
          <div className="flex h-[31px] items-center justify-between"><T w={188}>Victims_Between_14-18_Yrs:</T><T w={25}>554</T></div>
        </div>
      </div>
    </div>
  );
}

function FieldsPanel() {
  return (
    <div className="relative h-[528px] w-[336px] shrink-0 bg-white text-[14px] text-[#444]">
      <div className="flex h-[58px] items-end pl-4 text-[20px] leading-[26px]"><T w={54} c="text-[#333]">Fields</T></div>
      <div className="flex h-[470px]">
        <div className="w-[303px] overflow-hidden">
          <div className="mx-4 flex h-[17px] w-[271px] items-start justify-center overflow-hidden border-x border-b border-dashed border-[#8d8d8d] text-[12px] text-[#a8a8a8]"><div className="-mt-[13px]"><T w={124}>Click or drag data here</T></div></div>
          <div className="mt-[24px] flex h-5 items-center pl-4"><Icon s={15} v={15} c="text-black" w={1.500}><path d="M6 0 3.500 15M12 0 9.500 15M1.500 4.700h13M.5 10.300h13" /></Icon><T w={158} c="ml-[9px]">Location extrusion height</T></div>
          <div className="mt-[8px] ml-4 flex h-10 w-[271px] items-center bg-[#f3f3f3] pl-[13px]">
            <svg width="7" height="11" viewBox="0 0 7 11" fill="#161616"><path d="M0 0h2v2H0ZM5 0h2v2H5ZM0 4.500h2v2H0ZM5 4.500h2v2H5ZM0 9h2v2H0ZM5 9h2v2H5Z" /></svg>
            <T w={184} c="ml-[12px]">Victims_Between_14-18_Yrs</T><Dots c="ml-[29px]" />
          </div>
          <div className="mt-[32px] flex h-[62px] border-t-2 border-[#e0e0e0] pt-[10px] pl-[10px]"><Chevron c="mt-[4px]" /><T w={40} c="ml-[18px]">Points</T></div>
          <div className="flex h-[62px] border-t-2 border-[#e0e0e0] pt-[10px] pl-[10px]"><Chevron c="mt-[4px]" /><T w={119} c="ml-[18px]">Latitude/longitude</T></div>
          <div className="flex h-[53px] border-t border-[#e0e0e0] pt-[24px] pl-[17px]"><div className="mt-[5px]"><Funnel /></div><T w={73} c="ml-[9px]">Local filters</T></div>
          <div className="ml-4 flex h-14 w-[271px] bg-[#f3f3f3] pt-[6px] pl-4">
            <div className="w-[229px]"><T w={29} c="leading-5 font-semibold">Year</T><div className="mt-[6px] text-[12px] leading-4"><T w={82}>Includes: 2010</T></div></div>
            <div className="flex flex-col pt-[3px]"><Dots /><div className="mt-[9px] flex h-5 w-5 items-center justify-center rounded-full bg-[#4a4a4a] text-[12px] font-bold text-white">1</div></div>
          </div>
          <div className="mt-4 ml-4 flex h-[42px] w-[271px] items-center justify-center border border-dashed border-[#8d8d8d] text-[12px] text-[#a8a8a8]"><T w={124}>Click or drag data here</T></div>
        </div>
        <div className="flex h-[440px] w-[17px] flex-col items-center bg-[#f1f1f1]">
          <svg width="7" height="17" viewBox="0 0 7 17"><path d="M0 11h7L3.500 7Z" fill="#505050" /></svg>
          <div className="mt-[168px] h-[238px] w-[13px] bg-[#c1c1c1]" />
          <div className="w-full flex-1 bg-white" />
        </div>
      </div>
      <div className="absolute top-[472px] left-[272px] flex h-[48px] w-[48px] items-center justify-center rounded-full border border-[#8d8d8d] bg-[#0f62fe] text-white"><Icon s={20} v={20} w={1.500}><path d="M10 18l2.500-4H17a2 2 0 0 0 2-2V4a2 2 0 0 0-2-2H3a2 2 0 0 0-2 2v8a2 2 0 0 0 2 2h6M4.500 6h11M4.500 9.500h7" /></Icon></div>
    </div>
  );
}

/* ---------- taskbar ---------- */
const Store = () => <svg width="24" height="28" viewBox="0 0 24 28"><path d="M7 7V1h10v6" fill="none" stroke="#d8d8d8" strokeWidth="2" /><path d="M1 6h22v20H1Z" fill="#eee" /><path d="M8 12h3.500v4H8Z" fill="#f25022" /><path d="M13 12h3.500v4H13Z" fill="#7fba00" /><path d="M8 18h3.500v4H8Z" fill="#00a4ef" /><path d="M13 18h3.500v4H13Z" fill="#ffb900" /></svg>;
const Edge = () => <svg width="26" height="28" viewBox="0 0 26 28"><ellipse cx="13" cy="14" rx="12" ry="13" fill="#117bd0" /><path d="M1 12C3 4 9 1 14 1c7 0 11 6 11 10 0 5-4 7-9 6 2-2 0-7-5-7-4 0-8 1-10 2Z" fill="#36b9ce" /><path d="M16 1.500c6 1.500 9 6 9 10 0 5-4 7-9 6 4-2 4-11 0-16Z" fill="#62d477" /><path d="M11 13c-2 6 3 11 13 8-3 5-8 6-12 6-7-2-7-12-1-14Z" fill="#0e4f99" /><path d="M15 13c2 1 2 3 1 4 3 2 7 0 8-1 2 3-1 7-4 6-5-1-8-6-5-9Z" fill="#1d1d1d" /></svg>;
const Explorer = () => <svg width="22" height="21" viewBox="0 0 22 21"><path d="M0 0h8l2 2h12v19H0Z" fill="#f7c948" /><path d="M0 0h8l2 3H0Z" fill="#dc9d13" /><path d="M1 4h20v4H1Z" fill="#ffe083" /><path d="M4 11h14v10h-4v-5H8v5H4Z" fill="#3c97db" /></svg>;
const Mail = () => <svg width="24" height="26" viewBox="0 0 24 26"><path d="M0 10 12 0l12 10v16H0Z" fill="#0a64ac" /><path d="M3 9h18v8H3Z" fill="#fff" /><path d="m0 10 12 8 12-8v16H0Z" fill="#31b5ec" /><path d="m0 26 24-16v16Z" fill="#1493df" /></svg>;
const Office = () => <svg width="20" height="26" viewBox="0 0 20 26"><path d="m1 6 12-5 6 2v20l-6 2-12-5 11 1V5L5 8v9l-4 3Z" fill="#d83b01" /><path d="m1 6 12-5v4L5 8v9l-4 3Z" fill="#b72b45" /></svg>;
const Chrome = () => <svg width="24" height="26" viewBox="0 0 24 26"><ellipse cx="12" cy="13" rx="11" ry="12.500" fill="#fbc22d" /><path d="M2.500 7C8-2 17-1 21.500 7H12L7 16Z" fill="#e04a3a" /><path d="M2.500 7 8 16l5 2-3 7.500C1 24-1 14 2.500 7Z" fill="#38a852" /><circle cx="12" cy="13" r="5.500" fill="#fff" /><circle cx="12" cy="13" r="4.200" fill="#4285f4" /></svg>;

function Taskbar() {
  const slots: ReactNode[] = [
    <svg width="18" height="20" viewBox="0 0 18 20" key="cortana"><ellipse cx="9" cy="10" rx="6.500" ry="7.500" fill="none" stroke="#fff" strokeWidth="2.200" /></svg>,
    <Icon s={18} v={18} c="-ml-1 text-white" w={1.300} key="view"><path d="M1 1v3h11V1M1 17v-3h11V17M1.500 6h10v6h-10ZM16 0v5M16 10v8M14 7.500h4" /></Icon>,
    <Store key="store" />,
    <div className="flex h-7 w-6 items-center justify-center bg-black text-[#e50914]" key="n"><SiNetflix size={17} /></div>,
    <Edge key="edge" />, <Explorer key="ex" />, <Mail key="mail" />, <Office key="office" />,
    <div className="flex h-[25px] w-[22px] flex-col items-center bg-gradient-to-b from-[#7184bd] to-[#0853c8]" key="dev"><T w={19} c="text-[8px] leading-[12px] font-black text-white">DEV</T><T w={20} c="text-[9px] leading-[13px] font-bold text-[#06183c]">C++</T></div>,
    <Chrome key="chrome" />,
    <div className="flex h-[25px] w-[23px] items-center justify-center rounded-full bg-[#259bd6] text-white" key="tg"><FaTelegramPlane size={15} /></div>,
  ];
  return (
    <div className="flex h-10 items-center bg-[#1c1c1c] text-white">
      <div className="flex w-12 justify-center"><svg width="16" height="16" viewBox="0 0 16 16" fill="#fff"><path d="M0 2 6.500 1v6.500H0ZM7.500 1 16 0v7.500H7.500ZM0 8.500h6.500V15L0 14ZM7.500 8.500H16V16l-8.500-1Z" /></svg></div>
      <div className="flex h-10 w-[344px] items-center border border-[#b9b9b9] bg-[#f1f1f1] pl-[11px] text-[15px] text-[#333]">
        <Icon s={17} v={17} c="text-black" w={1.300}><circle cx="10.500" cy="6" r="5" /><path d="M7 9.800.8 16.200" /></Icon>
        <T w={128} c="ml-[11px]">Type here to search</T>
      </div>
      {slots.map((s, i) => (
        <div key={i} className={`flex h-10 shrink-0 items-center justify-center ${i === 9 ? "w-[48px] border-b-2 border-[#76b9ed] bg-[#4b4b4b]" : i === 10 ? "w-[49px]" : "w-[49.100px]"}`}>{s}</div>
      ))}
      <svg width="20" height="20" viewBox="0 0 20 20" className="ml-[109px]"><path d="M12 1a10 10 0 1 1-11 13C8 15 14 9 12 1Z" fill="#ffce0b" /></svg>
      <T w={29} c="ml-[10px] text-[14px]">25°C</T>
      <Icon s={12} v={12} c="ml-[18px]" w={1.300}><path d="m1 9 5-5 5 5" /></Icon>
      <Icon s={15} v={15} c="ml-[11px]" w={1.200}><path d="M.6 4h12v7H.6ZM14 6v3" /><path d="M2.500 5.500h5v4h-5Z" fill="#fff" stroke="none" /></Icon>
      <svg width="17" height="14" viewBox="0 0 17 14" className="ml-[8px]"><path d="M1 10a3 3 0 0 1 1-6 5 5 0 0 1 9-1 4 4 0 0 1 3 7Z" fill="#a4a4a4" /><circle cx="11.500" cy="9.500" r="4.500" fill="#d92537" /><path d="m9.800 7.800 3.400 3.400M13.200 7.800 9.800 11.200" stroke="#fff" /></svg>
      <Icon s={17} v={17} c="ml-[6px]" w={1.200}><path d="M1 6.500h2.500L7 3v11L3.500 10.500H1ZM9 6q1.500 2.500 0 5M11.500 4.500q2.500 4 0 8M14 3q3.500 5.500 0 11" /></Icon>
      <T w={23} c="ml-[10px] text-[12px]">ENG</T>
      <div className="ml-[13px] flex w-[58px] flex-col items-center text-[12px] leading-[18px]"><T w={27}>22:42</T><T w={57}>10-10-2021</T></div>
      <div className="relative ml-[18px] h-6 w-6">
        <svg width="16" height="17" viewBox="0 0 16 17"><path d="M0 0h16v13H9l-4 4v-4H0Z" fill="#fff" /><path d="M2.500 3.500h11M2.500 6.500h11M2.500 9.500h7" stroke="#1c1c1c" /></svg>
        <div className="absolute top-[7px] left-[7px] flex h-4 w-4 items-center justify-center rounded-full border border-[#999] bg-[#333] text-[11px]">2</div>
      </div>
      <div className="ml-auto h-10 w-[5px] border-l border-[#666]" />
    </div>
  );
}

export default function App() {
  return (
    <div className="h-[768px] w-[1366px] overflow-hidden bg-white">
      <div className="font-['Noto_Sans',sans-serif]"><BrowserTabs /><AddressBar /><Bookmarks /></div>
      <div className="font-['Roboto',sans-serif]">
        <AppHeader />
        <Toolbar />
        <div className="flex h-[536px]">
          <Sources />
          <div className="flex flex-1 flex-col bg-[#e0e0e0]">
            <div className="flex"><Canvas /><FieldsPanel /></div>
            <div className="flex h-2 items-center pl-[502px]"><div className="h-1 w-[14px] bg-[#777]" /></div>
          </div>
        </div>
      </div>
      <div className="font-['Noto_Sans',sans-serif]"><Taskbar /></div>
    </div>
  );
}
